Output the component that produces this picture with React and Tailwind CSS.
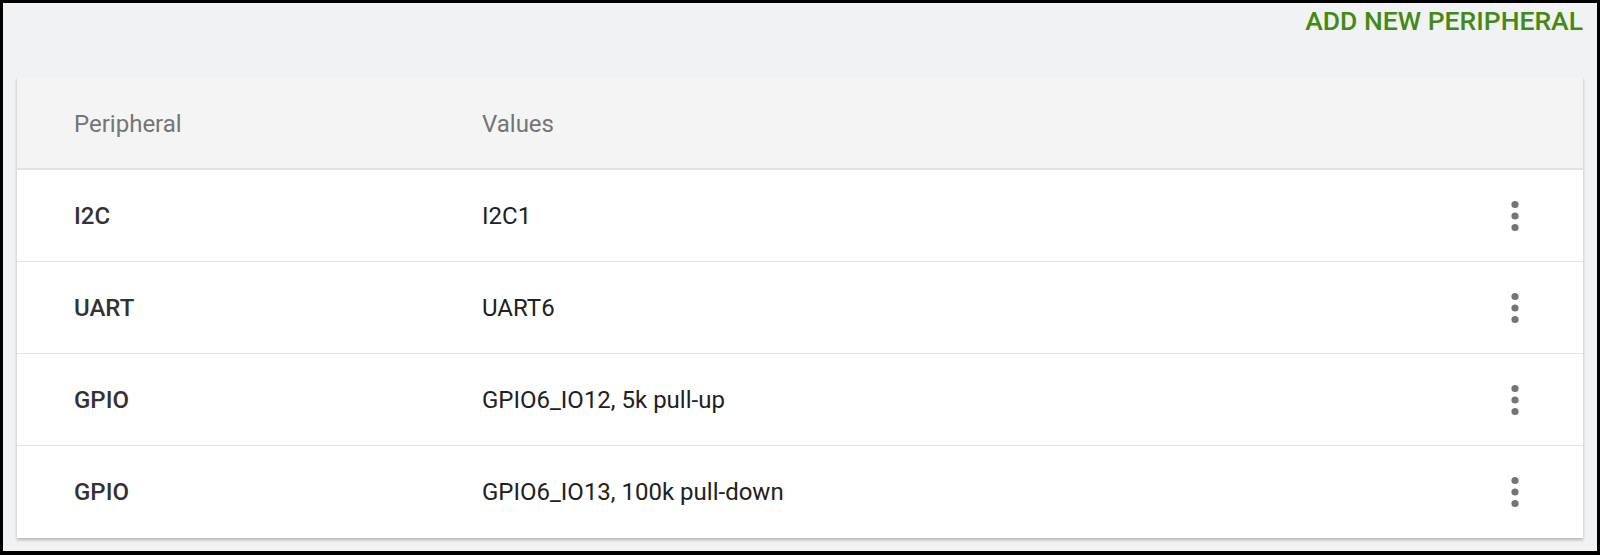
const rows = [
  { name: "I2C", value: "I2C1" },
  { name: "UART", value: "UART6" },
  { name: "GPIO", value: "GPIO6_IO12, 5k pull-up" },
  { name: "GPIO", value: "GPIO6_IO13, 100k pull-down" },
];

function MoreVert() {
  return (
    <svg width="12" height="34" viewBox="0 0 12 34" className="fill-[#757575]">
      <circle cx="6" cy="5.5" r="3.6" />
      <circle cx="6" cy="17" r="3.6" />
      <circle cx="6" cy="28.5" r="3.6" />
    </svg>
  );
}

export default function App() {
  return (
    <div className="h-[555px] w-[1600px] border-[3px] border-b-4 border-black bg-[#f1f2f4] px-[14px] font-['Roboto',sans-serif]">
      <div className="flex h-[74px] justify-end pt-[1px]">
        <button className="h-fit text-[26.5px] font-medium leading-[34px] text-[#438a14]">ADD NEW PERIPHERAL</button>
      </div>
      <div className="bg-white shadow-[0_2px_3px_rgba(0,0,0,0.25)]">
        <div className="flex h-[93px] items-center border-b-2 border-[#e2e2e2] bg-[#f4f4f4] pt-[3px] pl-[57px] text-[24px] text-[#757575]">
          <div className="w-[408px]">Peripheral</div>
          <div>Values</div>
        </div>
        {rows.map((r, i) => (
          <div
            key={i}
            className={
              "flex h-[92px] items-center pl-[57px] text-[24px] text-[#212121] " +
              (i < rows.length - 1 ? "border-b border-[#e2e2e2]" : "")
            }
          >
            <div className="w-[408px] font-medium text-[#333]">{r.name}</div>
            <div className="flex-1">{r.value}</div>
            <div className="mr-[62px] flex items-center">
              <MoreVert />
            </div>
          </div>
        ))}
      </div>
    </div>
  );
}
